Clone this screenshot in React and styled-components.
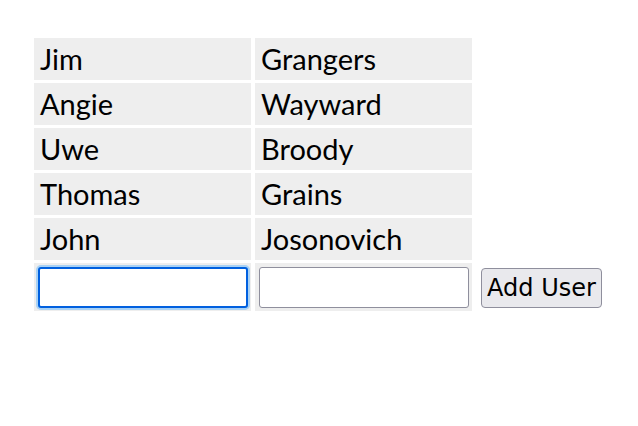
import React, { useEffect, useRef, useState } from 'react';
import styled, { createGlobalStyle } from 'styled-components';

const GlobalStyle = createGlobalStyle`
  html, body {
    margin: 0;
    padding: 0;
    background: #fff;
  }
  body {
    font-family: Lato, "Noto Sans", "Liberation Sans", sans-serif;
    color: #000;
  }
`;

const Page = styled.div`
  padding: 35px 30px;
`;

const UserTable = styled.table`
  border-collapse: separate;
  border-spacing: 4px 3px;
`;

const Cell = styled.td`
  width: 205px;
  height: 42px;
  padding: 0 6px;
  background: #eeeeee;
  font-size: 29px;
  line-height: 42px;
  vertical-align: middle;
`;

const InputCell = styled.td`
  width: ${(p) => (p.plain ? 'auto' : '210px')};
  height: 41px;
  padding: 4px 3px 3px 4px;
  background: ${(p) => (p.plain ? 'transparent' : '#eeeeee')};
  vertical-align: top;
  white-space: nowrap;
`;

const TextInput = styled.input`
  display: block;
  width: 210px;
  height: 41px;
  margin: 0;
  box-sizing: border-box;
  border: 1px solid #8f8f9d;
  border-radius: 3px;
  background: #fff;
  font-size: 20px;
  padding: 2px 6px;
  outline: none;
  &:focus {
    border: 2px solid #0060df;
    box-shadow: 0 0 0 2px #a9d2f5;
  }
`;

const AddButton = styled.button`
  display: block;
  width: 121px;
  height: 40px;
  margin: 1px 0 0 1px;
  padding: 0 3px;
  border: 1px solid #8f8f9d;
  border-radius: 4px;
  background: #e9e9ed;
  font-family: "DejaVu Sans", Tahoma, sans-serif;
  font-size: 24px;
  white-space: nowrap;
  color: #000;
`;

const users = [
  ['Jim', 'Grangers'],
  ['Angie', 'Wayward'],
  ['Uwe', 'Broody'],
  ['Thomas', 'Grains'],
  ['John', 'Josonovich'],
];

export default function App() {
  const [first, setFirst] = useState('');
  const [last, setLast] = useState('');
  const firstRef = useRef(null);

  useEffect(() => {
    if (firstRef.current) firstRef.current.focus();
  }, []);

  return (
    <Page>
      <GlobalStyle />
      <UserTable>
        <tbody>
          {users.map(([f, l]) => (
            <tr key={f}>
              <Cell>{f}</Cell>
              <Cell>{l}</Cell>
            </tr>
          ))}
          <tr>
            <InputCell>
              <TextInput ref={firstRef} value={first} onChange={(e) => setFirst(e.target.value)} />
            </InputCell>
            <InputCell>
              <TextInput value={last} onChange={(e) => setLast(e.target.value)} />
            </InputCell>
            <InputCell plain>
              <AddButton type="button">Add User</AddButton>
            </InputCell>
          </tr>
        </tbody>
      </UserTable>
    </Page>
  );
}
